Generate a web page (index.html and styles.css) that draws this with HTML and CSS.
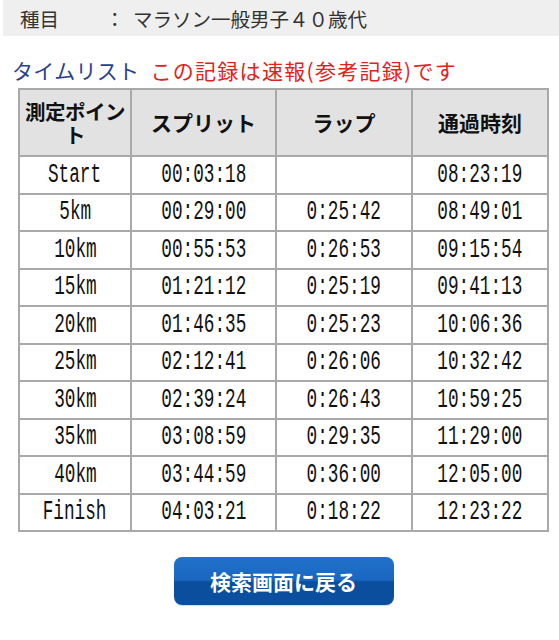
FILE: index.html
```html
<!DOCTYPE html>
<html lang="ja">
<head>
<meta charset="utf-8">
<link rel="stylesheet" href="styles.css">
</head>
<body>
<div class="top">
  <span class="top-label">種目</span>
  <span class="top-colon">：</span>
  <span class="top-value">マラソン一般男子４０歳代</span>
</div>
<h2 class="title"><span class="title-blue">タイムリスト</span> <span class="title-red">この記録は速報(参考記録)です</span></h2>
<div class="wrap">
<table class="times">
  <thead>
    <tr><th class="c1">測定ポイント</th><th class="c2">スプリット</th><th class="c3">ラップ</th><th class="c4">通過時刻</th></tr>
  </thead>
  <tbody>
    <tr><td><span class="n">Start</span></td><td><span class="n">00:03:18</span></td><td></td><td><span class="n">08:23:19</span></td></tr>
    <tr><td><span class="n">5km</span></td><td><span class="n">00:29:00</span></td><td><span class="n">0:25:42</span></td><td><span class="n">08:49:01</span></td></tr>
    <tr><td><span class="n">10km</span></td><td><span class="n">00:55:53</span></td><td><span class="n">0:26:53</span></td><td><span class="n">09:15:54</span></td></tr>
    <tr><td><span class="n">15km</span></td><td><span class="n">01:21:12</span></td><td><span class="n">0:25:19</span></td><td><span class="n">09:41:13</span></td></tr>
    <tr><td><span class="n">20km</span></td><td><span class="n">01:46:35</span></td><td><span class="n">0:25:23</span></td><td><span class="n">10:06:36</span></td></tr>
    <tr><td><span class="n">25km</span></td><td><span class="n">02:12:41</span></td><td><span class="n">0:26:06</span></td><td><span class="n">10:32:42</span></td></tr>
    <tr><td><span class="n">30km</span></td><td><span class="n">02:39:24</span></td><td><span class="n">0:26:43</span></td><td><span class="n">10:59:25</span></td></tr>
    <tr><td><span class="n">35km</span></td><td><span class="n">03:08:59</span></td><td><span class="n">0:29:35</span></td><td><span class="n">11:29:00</span></td></tr>
    <tr><td><span class="n">40km</span></td><td><span class="n">03:44:59</span></td><td><span class="n">0:36:00</span></td><td><span class="n">12:05:00</span></td></tr>
    <tr><td><span class="n">Finish</span></td><td><span class="n">04:03:21</span></td><td><span class="n">0:18:22</span></td><td><span class="n">12:23:22</span></td></tr>
  </tbody>
</table>
<div class="btn-row"><a class="btn" href="#">検索画面に戻る</a></div>
</div>
</body>
</html>
```

FILE: styles.css
```css
html, body {
  margin: 0;
  padding: 0;
  background: #ffffff;
}
body {
  font-family: "Noto Sans CJK JP", "Noto Sans", sans-serif;
  color: #222;
  width: 559px;
  height: 640px;
  overflow: hidden;
}
.top {
  margin-left: 3px;
  height: 36px;
  background: #efefef;
  display: flex;
  align-items: center;
  padding-left: 17px;
  font-size: 19.5px;
  color: #333;
}
.top-label {
  width: 85px;
}
.top-colon {
  width: 28px;
}
.title {
  margin: 19px 0 0 12px;
  font-size: 21px;
  font-weight: normal;
  line-height: 30px;
  letter-spacing: 0.3px;
}
.title-blue {
  color: #2b3f91;
}
.title-red {
  color: #e3201b;
  margin-left: 6px;
  letter-spacing: 1.3px;
}
.wrap {
  margin-left: 18px;
  width: 531px;
  margin-top: 3px;
}
.times {
  width: 531px;
  border-collapse: collapse;
  table-layout: fixed;
}
.times th, .times td {
  border: 2px solid #a9a9a9;
  text-align: center;
  padding: 0;
}
.times th {
  background: #e2e2e2;
  height: 65px;
  font-size: 21px;
  line-height: 23px;
  font-weight: bold;
  color: #111;
}
.times .c1 { width: 110px; font-size: 20.5px; letter-spacing: -0.5px; }
.times .c2 { width: 143px; }
.times .c3 { width: 134px; }
.times td {
  height: 35.5px;
  color: #111;
}
.n {
  display: inline-block;
  font-family: "Liberation Mono", monospace;
  font-size: 27px;
  line-height: 30px;
  transform: scaleX(0.656);
}
.btn-row {
  display: flex;
  justify-content: center;
  margin-top: 25px;
}
.btn {
  display: block;
  width: 220px;
  height: 48px;
  border-radius: 8px;
  background: linear-gradient(#2172cc 0%, #1a66c0 48%, #0a4e9e 52%, #0c4f9f 100%);
  color: #fff;
  font-weight: bold;
  font-size: 21px;
  line-height: 48px;
  text-align: center;
  text-decoration: none;
  box-shadow: 0 1px 1px rgba(0,0,0,0.15);
}
```
